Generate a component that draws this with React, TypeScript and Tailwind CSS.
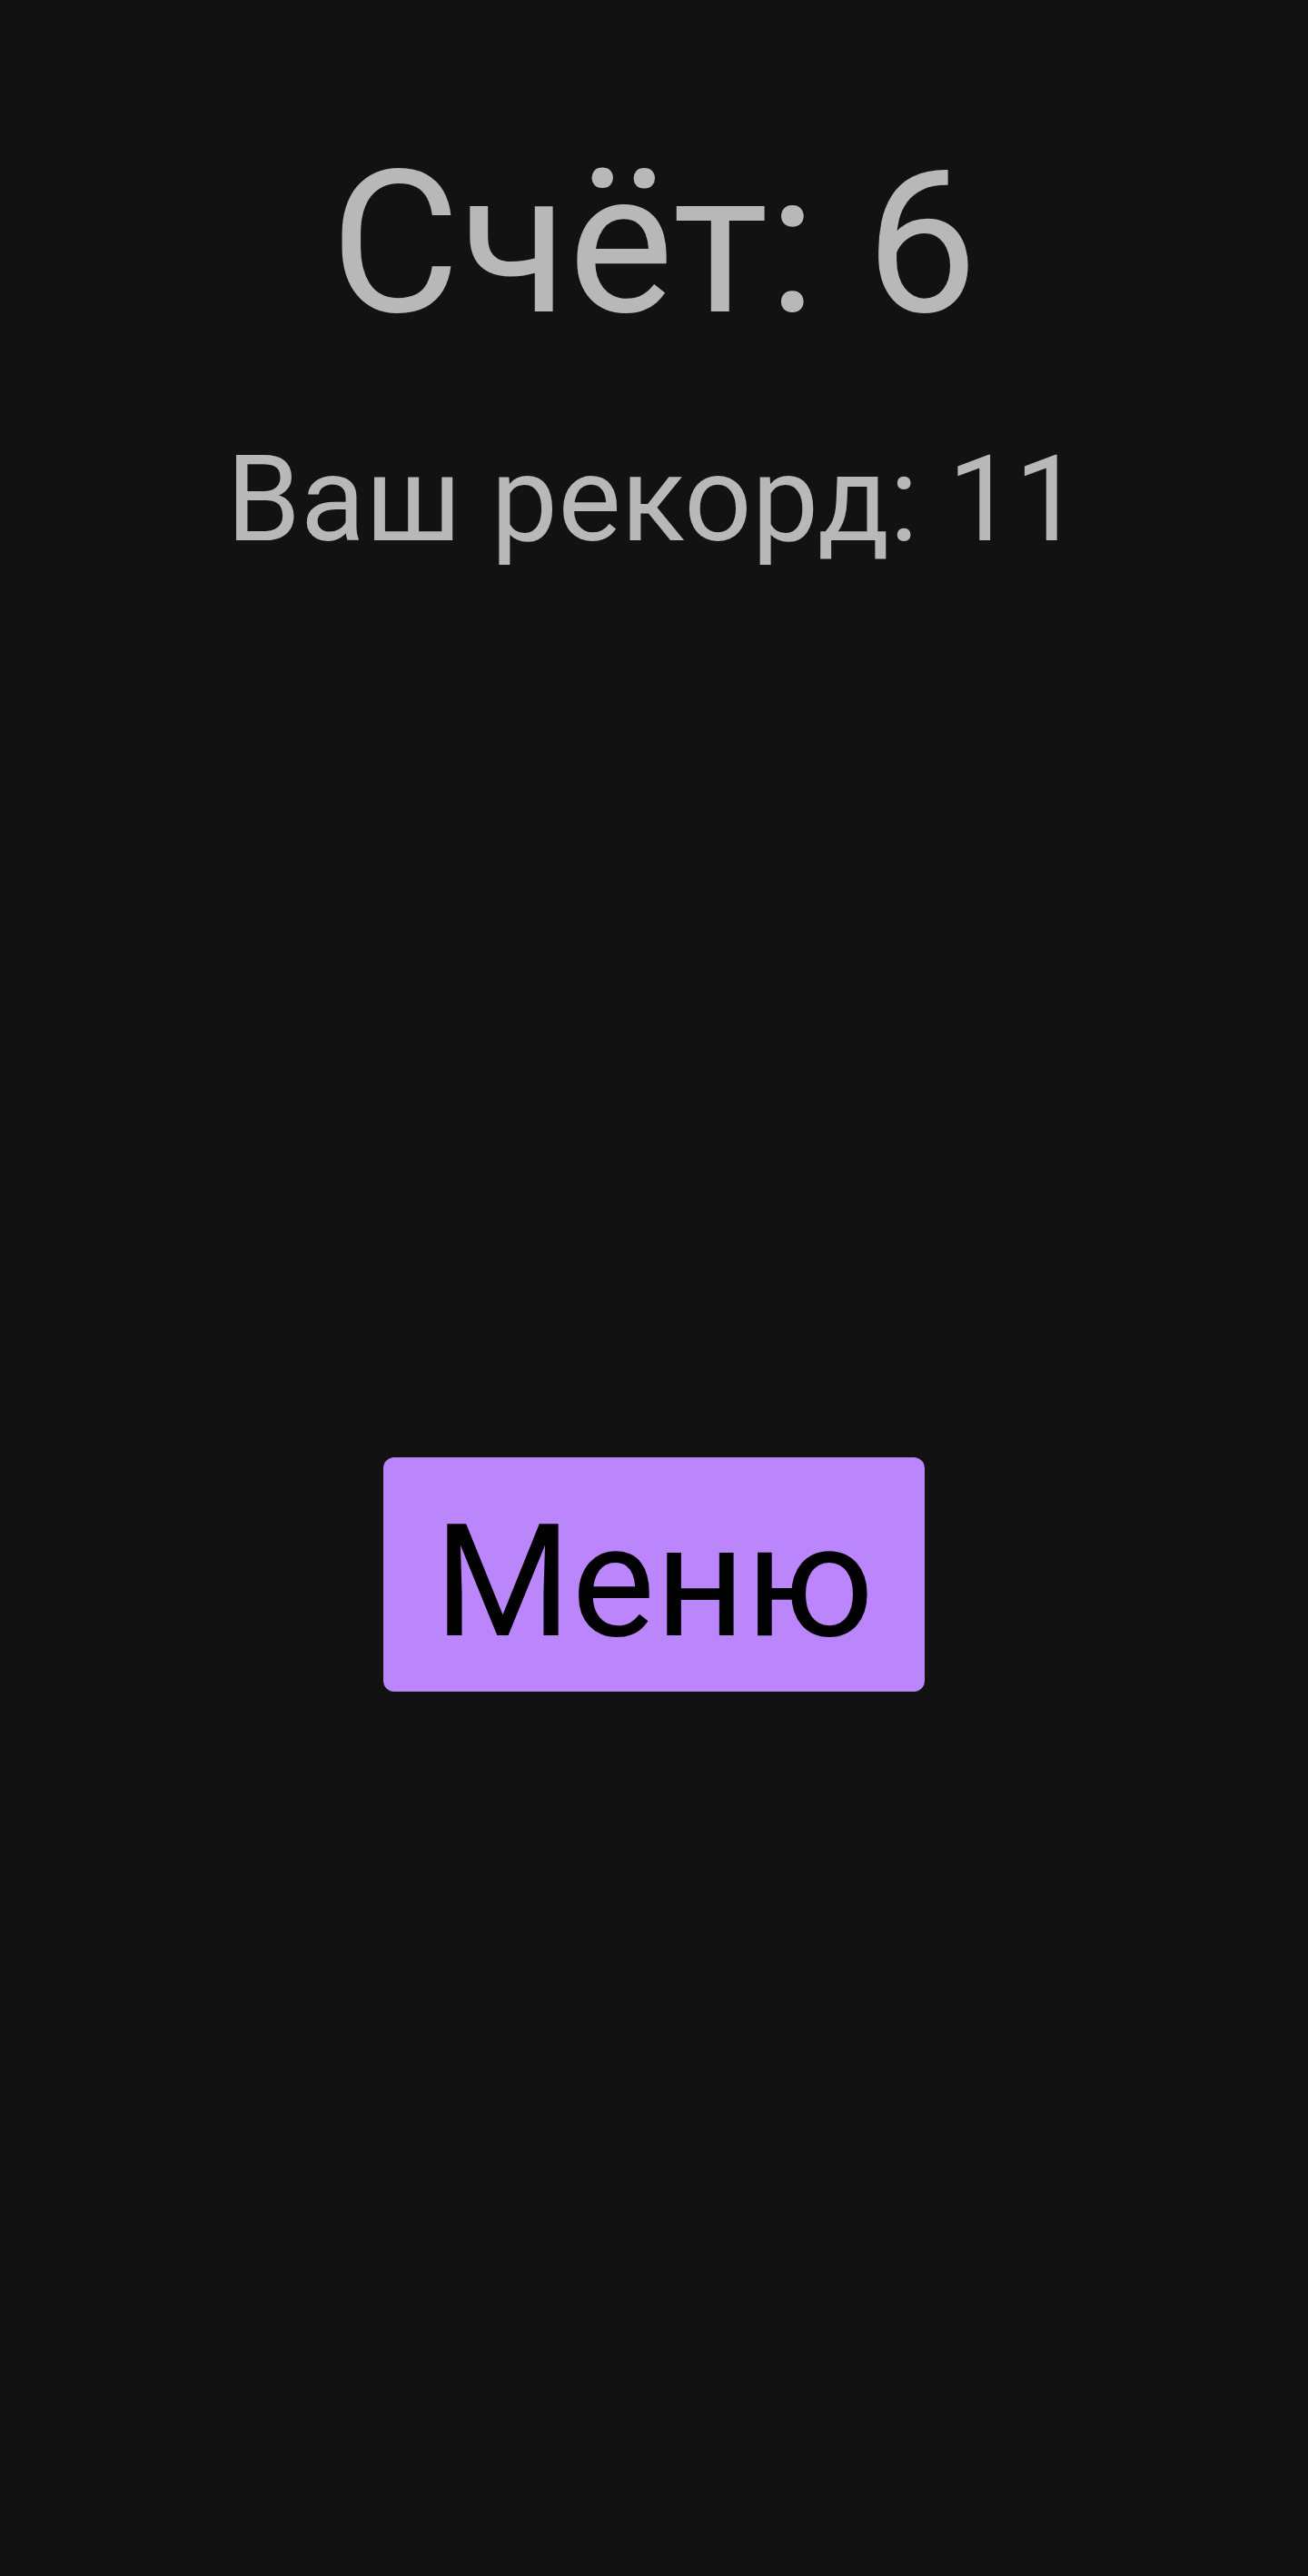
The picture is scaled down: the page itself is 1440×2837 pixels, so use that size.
import React from 'react';

const App: React.FC = () => {
    const score = 6;
    const best = 11;

    return (
        <div className="min-h-[2837px] w-full bg-[#121212] flex flex-col items-center font-['Roboto',sans-serif]">
            <h1 className="mt-[159px] text-[219px] leading-none font-normal text-[#b8b8b8]">
                Счёт: {score}
            </h1>
            <p className="mt-[107px] text-[131px] leading-none text-[#b8b8b8]">
                Ваш рекорд: {best}
            </p>
            <button className="mt-[989px] w-[596px] h-[258px] rounded-[12px] bg-[#bb86fc] text-black text-[173px] leading-normal flex items-center justify-center pt-[18px]">
                Меню
            </button>
        </div>
    );
};

export default App;
